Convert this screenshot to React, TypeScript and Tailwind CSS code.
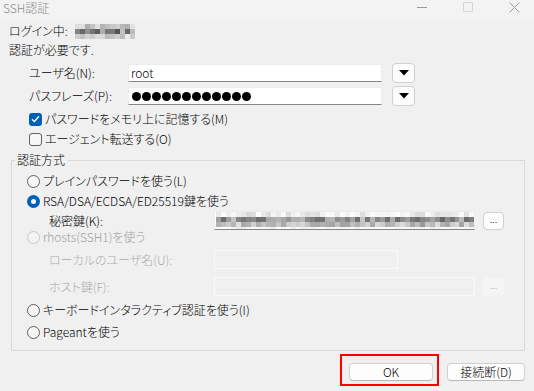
import React from 'react';

// gray mosaic used for the blurred-out address and key path
function Mosaic({ cols, rows, cell, seed, ranges }: { cols: number; rows: number; cell: number; seed: number; ranges: [number, number][] }) {
  let s = seed;
  const rand = () => {
    s = (s * 9301 + 49297) % 233280;
    return s / 233280;
  };
  return (
    <div className="flex flex-col">
      {Array.from({ length: rows }).map((_, r) => (
        <div key={r} className="flex">
          {Array.from({ length: cols }).map((_, c) => {
            const [lo, hi] = ranges[r % ranges.length];
            const g = Math.round(lo + rand() * (hi - lo));
            return <div key={c} style={{ width: cell, height: cell, background: `rgb(${g},${g},${g})` }} />;
          })}
        </div>
      ))}
    </div>
  );
}

function Radio({ checked, disabled }: { checked?: boolean; disabled?: boolean }) {
  if (checked) {
    return (
      <div className="w-[13px] h-[13px] rounded-full bg-[#005fb8] flex items-center justify-center shrink-0">
        <div className="w-[5px] h-[5px] rounded-full bg-white" />
      </div>
    );
  }
  return (
    <div className={`w-[13px] h-[13px] rounded-full border shrink-0 ${disabled ? 'border-[#c8c8c8] bg-[#f3f3f3]' : 'border-[#5f5f5f] bg-[#f6f6f6]'}`} />
  );
}

function Checkbox({ checked }: { checked?: boolean }) {
  if (checked) {
    return (
      <div className="w-[13px] h-[13px] rounded-[3px] bg-[#005fb8] flex items-center justify-center shrink-0">
        <svg width="9" height="8" viewBox="0 0 9 8">
          <polyline points="1,4.2 3.4,6.5 8,1.3" fill="none" stroke="white" strokeWidth="1.3" />
        </svg>
      </div>
    );
  }
  return <div className="w-[13px] h-[13px] rounded-[3px] border border-[#5f5f5f] bg-[#f6f6f6] shrink-0" />;
}

function DropButton() {
  return (
    <div className="ml-[10px] w-[23px] h-[20px] rounded-[4px] border border-[#d0d0d0] bg-[#fdfdfd] flex items-center justify-center">
      <svg width="10" height="6" viewBox="0 0 10 6">
        <polygon points="0,0 10,0 5,5.5" fill="black" />
      </svg>
    </div>
  );
}

function TextBox({ width, children }: { width: string; children?: React.ReactNode }) {
  return (
    <div className={`${width} h-[18px] bg-white border border-[#ececec] border-b-[#868686] flex items-center px-[2px] overflow-hidden`}>
      {children}
    </div>
  );
}

export default function App() {
  return (
    <div className="w-[534px] h-[391px] bg-[#f0f0f0] overflow-hidden text-[12px] leading-[18px] text-black font-light font-['Noto_Sans_CJK_JP',sans-serif] [font-feature-settings:'palt']">
      {/* title bar */}
      <div className="h-[20px] bg-[#f3f3f3] flex items-start">
        <div className="pl-[3px] leading-[15px] text-[12px] text-[#8c8c8c] flex-1">SSH認証</div>
        <div className="flex mr-[-3px]">
          <div className="w-[46px] h-[14px] flex items-center justify-center">
            <div className="w-[10px] h-px bg-[#9a9a9a]" />
          </div>
          <div className="w-[46px] h-[14px] flex items-center justify-center">
            <div className="w-[10px] h-[10px] rounded-[1px] border border-[#d4d4d4]" />
          </div>
          <div className="w-[46px] h-[14px] flex items-center justify-center">
            <svg width="11" height="11" viewBox="0 0 11 11">
              <path d="M0.5 0.5 L10.5 10.5 M10.5 0.5 L0.5 10.5" stroke="#9a9a9a" strokeWidth="1" />
            </svg>
          </div>
        </div>
      </div>

      <div className="pl-[9px] pr-[9px]">
        <div className="mt-[2px] h-[18px] flex items-center">
          <span>ログイン中:</span>
          <div className="ml-[7px]">
            <Mosaic cols={12} rows={3} cell={5} seed={17} ranges={[[170, 230], [80, 210], [185, 235]]} />
          </div>
        </div>
        <div className="mt-[1px] h-[18px] flex items-center">認証が必要です.</div>

        <div className="mt-[4px] h-[20px] flex items-center pl-[20px]">
          <span className="w-[99px]">ユーザ名(N):</span>
          <TextBox width="w-[254px]">
            <span className="leading-[16px]">root</span>
          </TextBox>
          <DropButton />
        </div>
        <div className="mt-[3px] h-[20px] flex items-center pl-[20px]">
          <span className="w-[99px]">パスフレーズ(P):</span>
          <TextBox width="w-[254px]">
            <div className="flex gap-[1px] ml-px">
              {Array.from({ length: 12 }).map((_, i) => (
                <div key={i} className="w-[9px] h-[9px] rounded-full bg-black" />
              ))}
            </div>
          </TextBox>
          <DropButton />
        </div>

        <div className="mt-[4px] h-[18px] flex items-center pl-[20px] gap-[3px]">
          <Checkbox checked />
          <span>パスワードをメモリ上に記憶する(M)</span>
        </div>
        <div className="mt-[2px] h-[18px] flex items-center pl-[20px] gap-[3px]">
          <Checkbox />
          <span>エージェント転送する(O)</span>
        </div>

        <fieldset className="ml-[2px] mt-[3px] border border-[#dadada] pb-[9px]">
          <legend className="ml-[3px] px-[2px]">認証方式</legend>
          <div className="pl-[15px]">
            <div className="mt-[3px] h-[18px] flex items-center gap-[3px]">
              <Radio />
              <span>プレインパスワードを使う(L)</span>
            </div>
            <div className="mt-[2px] h-[18px] flex items-center gap-[3px]">
              <Radio checked />
              <span>RSA/DSA/ECDSA/ED25519鍵を使う</span>
            </div>
            <div className="mt-px h-[19px] flex items-center pl-[22px]">
              <span className="w-[165px]">秘密鍵(K):</span>
              <div className="w-[261px] h-[19px] bg-white border border-[#ececec] border-b-[#868686] overflow-hidden pl-px">
                <Mosaic cols={52} rows={4} cell={5} seed={5} ranges={[[215, 255], [100, 200], [150, 225], [235, 255]]} />
              </div>
              <div className="ml-[8px] w-[21px] h-[18px] rounded-[4px] border border-[#d0d0d0] bg-[#fdfdfd] flex items-center justify-center text-[10px] leading-[10px] pb-[3px]">...</div>
            </div>
            <div className="h-[14px] flex items-center gap-[3px] text-[#a0a0a0]">
              <Radio disabled />
              <span>rhosts(SSH1)を使う</span>
            </div>
            <div className="mt-[6px] h-[19px] flex items-center pl-[22px] text-[#acacac]">
              <span className="w-[165px]">ローカルのユーザ名(U):</span>
              <div className="w-[184px] h-[19px] border border-[#fafafa] bg-[#f0f0f0]" />
            </div>
            <div className="mt-[8px] h-[19px] flex items-center pl-[22px] text-[#acacac]">
              <span className="w-[165px]">ホスト鍵(F):</span>
              <div className="w-[261px] h-[19px] border border-[#fafafa] bg-[#f0f0f0]" />
              <div className="ml-[8px] w-[21px] h-[18px] rounded-[4px] bg-[#f5f5f5] flex items-center justify-center text-[10px] leading-[10px] pb-[3px] text-[#a8a8a8]">...</div>
            </div>
            <div className="mt-[5px] h-[18px] flex items-center gap-[3px]">
              <Radio />
              <span>キーボードインタラクティブ認証を使う(I)</span>
            </div>
            <div className="mt-[4px] h-[18px] flex items-center gap-[3px]">
              <Radio />
              <span>Pageantを使う</span>
            </div>
          </div>
        </fieldset>

        <div className="mt-[12px] flex justify-end gap-[14px]">
          <div className="relative">
            <button className="w-[84px] h-[18px] rounded-[4px] border border-[#d0d0d0] border-b-[#b8b8b8] bg-[#fdfdfd] flex items-center justify-center leading-[16px]">OK</button>
            <div className="absolute left-[-9px] top-[-9px] w-[99px] h-[32px] border-2 border-[#ff0000]" />
          </div>
          <button className="w-[78px] h-[18px] rounded-[4px] border border-[#d0d0d0] border-b-[#b8b8b8] bg-[#fdfdfd] flex items-center justify-center leading-[16px]">接続断(D)</button>
        </div>
      </div>
    </div>
  );
}
